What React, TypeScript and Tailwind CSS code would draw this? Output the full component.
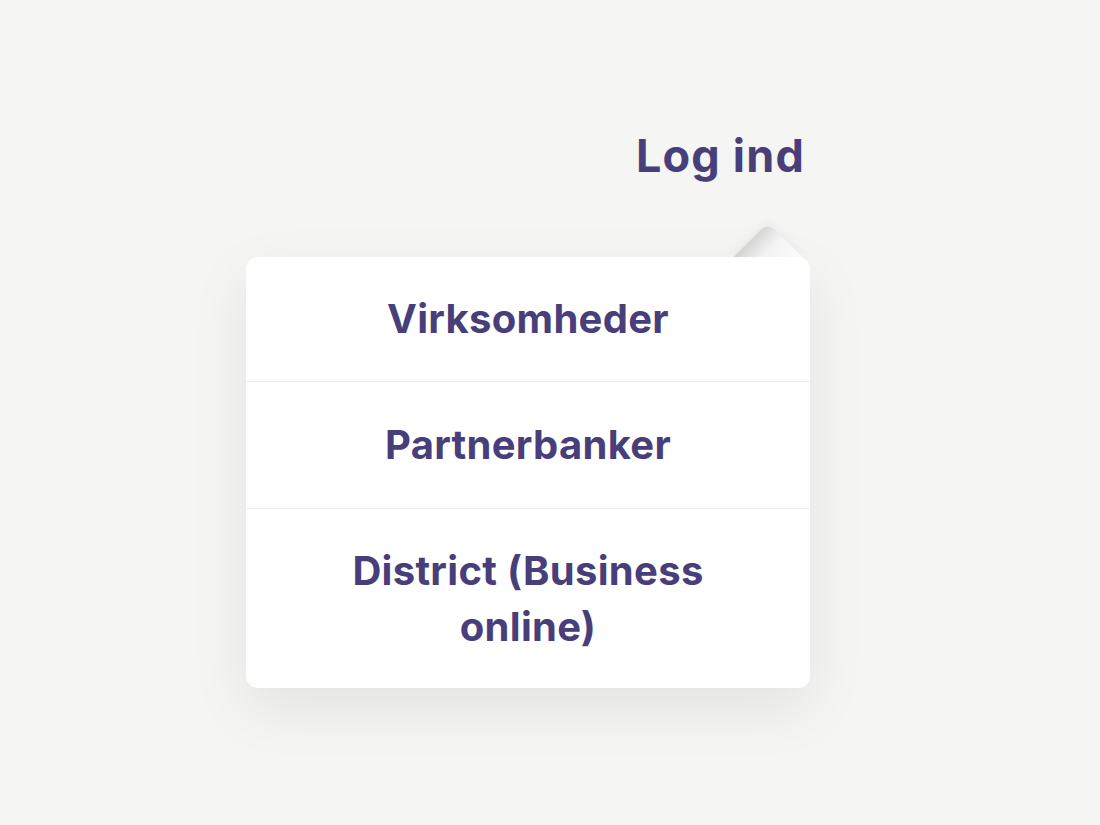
import React from "react";

const items = ["Virksomheder", "Partnerbanker", "District (Business online)"];

export default function App() {
  return (
    <div
      className="min-h-[825px] w-full bg-[#f5f5f3] pl-[246px] pt-[128px]"
      style={{ fontFamily: "Inter, 'Noto Sans', sans-serif" }}
    >
      <div className="w-[564px]">
        <div className="flex justify-end pr-[5px]">
          <span className="text-[45px] font-bold leading-[56px] tracking-[1.2px] text-[#483e7a]">
            Log ind
          </span>
        </div>

        <div className="relative mt-[73px]">
          {/* pil mod "Log ind" */}
          <div className="absolute right-[17px] top-[-24px] h-[50px] w-[50px] rotate-45 rounded-tl-[10px] bg-gradient-to-r from-[#d6d6d6] via-[#f6f6f6] via-40% to-white shadow-[-3px_-3px_8px_rgba(0,0,0,0.04)]" />
          <div className="relative overflow-hidden rounded-[12px] bg-white shadow-[0_20px_60px_rgba(0,0,0,0.08)]">
            <ul className="divide-y divide-[#efefef]">
              {items.map((t, i) => (
                <li
                  key={t}
                  className={`flex items-center justify-center px-[100px] text-center text-[40px] font-bold leading-[56px] tracking-[0.3px] text-[#483e7a] ${
                    i === 2 ? "h-[179px]" : i === 1 ? "h-[127px]" : "h-[125px]"
                  }`}
                >
                  {t}
                </li>
              ))}
            </ul>
          </div>
        </div>
      </div>
    </div>
  );
}
